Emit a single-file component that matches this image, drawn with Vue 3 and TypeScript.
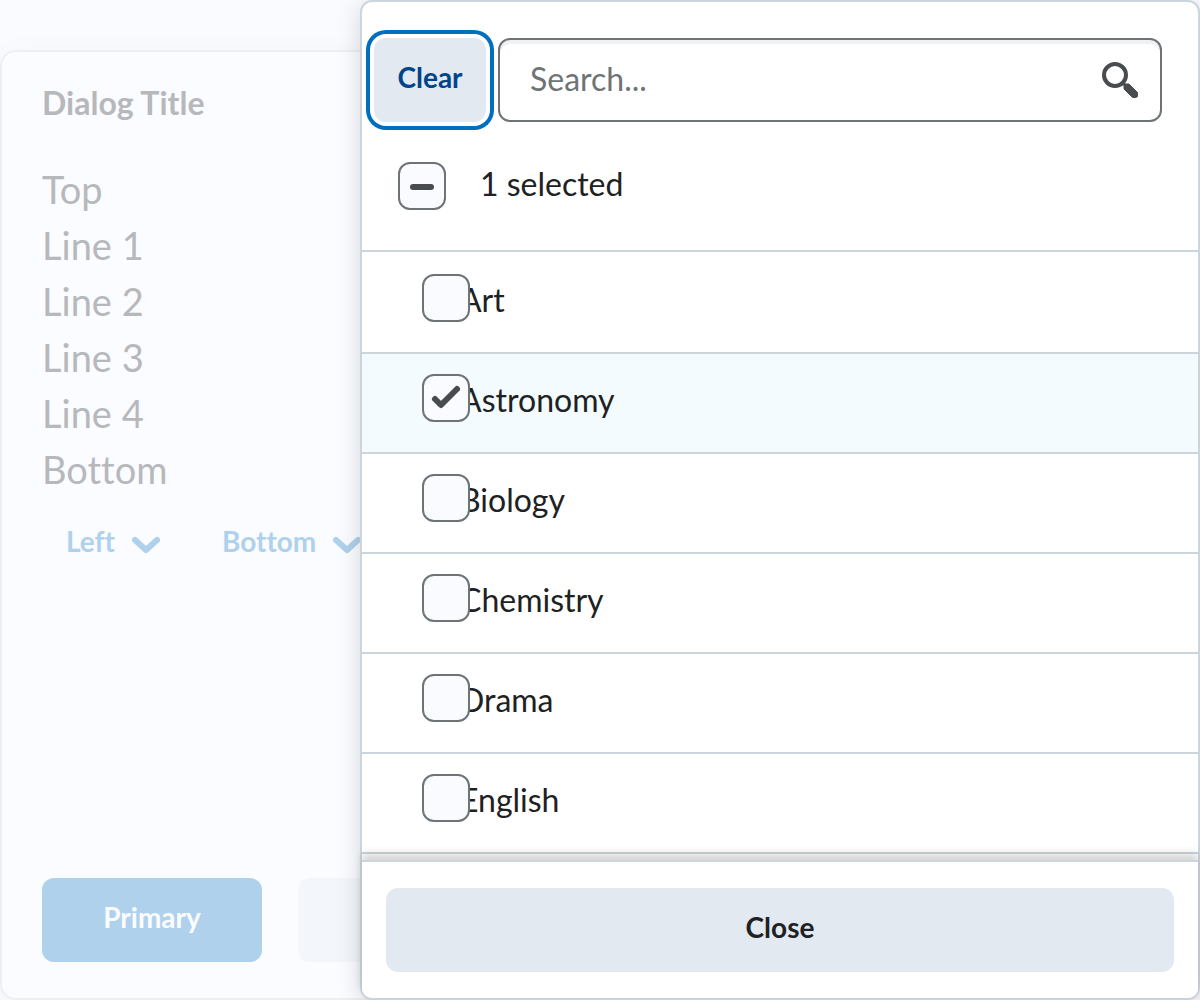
<script setup lang="ts">
import { computed, ref, onMounted } from 'vue'

interface Subject {
  key: string
  label: string
  selected: boolean
}

const lines = ['Top', 'Line 1', 'Line 2', 'Line 3', 'Line 4', 'Bottom']
const menus = ['Left', 'Bottom']

const subjects = ref<Subject[]>([
  { key: 'art', label: 'Art', selected: false },
  { key: 'astronomy', label: 'Astronomy', selected: true },
  { key: 'biology', label: 'Biology', selected: false },
  { key: 'chemistry', label: 'Chemistry', selected: false },
  { key: 'drama', label: 'Drama', selected: false },
  { key: 'english', label: 'English', selected: false },
])

const query = ref('')
const clearButton = ref<HTMLButtonElement | null>(null)

const selectedCount = computed(() => subjects.value.filter((s) => s.selected).length)
const allSelected = computed(() => selectedCount.value === subjects.value.length)
const someSelected = computed(() => selectedCount.value > 0 && !allSelected.value)

function clearAll(): void {
  subjects.value.forEach((s) => (s.selected = false))
}

function toggleAll(): void {
  const next = !allSelected.value
  subjects.value.forEach((s) => (s.selected = next))
}

onMounted(() => clearButton.value?.focus())
</script>

<template>
  <div class="page">
    <main class="dialog">
      <h1 class="dialog-title">Dialog Title</h1>
      <div class="dialog-body">
        <p v-for="line in lines" :key="line">{{ line }}</p>
        <div class="menus">
          <button v-for="menu in menus" :key="menu" type="button" class="menu-button">
            {{ menu }}
            <svg class="chevron" viewBox="0 0 28 18" aria-hidden="true">
              <path d="M3 4 L14 14 L25 4" />
            </svg>
          </button>
        </div>
      </div>
      <div class="dialog-footer">
        <button type="button" class="primary">Primary</button>
        <button type="button" class="secondary" aria-label="Secondary"></button>
      </div>
    </main>

    <section class="panel" aria-label="Filter">
      <header class="panel-header">
        <div class="search-row">
          <button ref="clearButton" type="button" class="clear" @click="clearAll">Clear</button>
          <div class="search">
            <input v-model="query" type="text" placeholder="Search..." aria-label="Search" />
            <button type="button" class="search-button" aria-label="Search">
              <svg viewBox="0 0 36 36" aria-hidden="true">
                <circle cx="13" cy="13" r="11" fill="none" stroke="#494c4e" stroke-width="4" />
                <path d="M20 20 L25 25" stroke="#494c4e" stroke-width="3" />
                <path
                  d="M22 24 Q22 22 24 22 H27 L35 30 Q37 32 35.500 34.500 Q33 37 30 35 L22 27 Z"
                  fill="#494c4e"
                  stroke="#494c4e"
                  stroke-width="1"
                />
              </svg>
            </button>
          </div>
        </div>
        <label class="select-all">
          <span class="box">
            <input type="checkbox" :checked="allSelected" :indeterminate="someSelected" @change="toggleAll" />
            <svg v-if="someSelected" viewBox="0 0 48 48" aria-hidden="true">
              <path d="M15 25 H33" />
            </svg>
          </span>
          <span>{{ selectedCount }} selected</span>
        </label>
      </header>

      <ul class="subjects">
        <li v-for="subject in subjects" :key="subject.key" :class="{ selected: subject.selected }">
          <label>
            <span class="box">
              <input v-model="subject.selected" type="checkbox" />
              <svg v-if="subject.selected" viewBox="0 0 48 48" aria-hidden="true">
                <path d="M13 25 L19 31 L35 15" />
              </svg>
            </span>
            <span>{{ subject.label }}</span>
          </label>
        </li>
      </ul>

      <footer class="panel-footer">
        <button type="button" class="close">Close</button>
      </footer>
    </section>
  </div>
</template>

<style>
body {
  margin: 0;
  background: #fafbff;
}
</style>

<style scoped>
.page {
  position: relative;
  display: flex;
  min-height: 100vh;
  box-sizing: border-box;
  padding-top: 50px;
  overflow: hidden;
  color: #202122;
  font-family: Lato, 'Liberation Sans', sans-serif;
  font-size: 32px;
  font-variant-ligatures: none;
  line-height: 48px;
}

button {
  border: 0;
  border-radius: 12px;
  font-family: inherit;
  font-size: 28px;
  font-weight: 700;
  font-variant-ligatures: none;
  line-height: 40px;
  cursor: pointer;
}

.dialog {
  display: flex;
  flex: 1;
  flex-direction: column;
  box-sizing: border-box;
  padding: 27px 40px 36px;
  border: 2px solid #edeff3;
  border-radius: 16px;
  background: #fbfcff;
  box-shadow: 0 4px 24px #f1f2f6;
  color: #b7b8bc;
}

.dialog-title {
  margin: 0 0 34px;
  font-size: 32px;
  font-weight: 700;
  line-height: 48px;
}

.dialog-body {
  flex: 1;
  font-size: 38px;
  line-height: 56px;
}

.dialog-body p {
  margin: 0;
}

.menus {
  display: flex;
  gap: 14px;
  margin-top: 2px;
}

.menu-button {
  display: flex;
  align-items: center;
  gap: 17px;
  height: 84px;
  padding: 0 24px;
  background: none;
  color: #afd1ec;
}

.chevron {
  width: 28px;
  height: 18px;
  margin-top: 8px;
  fill: none;
  stroke: #afd1ec;
  stroke-width: 6;
  stroke-linecap: round;
  stroke-linejoin: round;
}

.dialog-footer {
  display: flex;
  gap: 36px;
}

.primary,
.secondary {
  width: 220px;
  height: 84px;
  padding: 0 0 6px;
}

.primary {
  background: #afd1ec;
  color: #fbfcff;
}

.secondary {
  background: #f3f6fb;
}

.panel {
  position: absolute;
  inset: 0 0 0 30%;
  display: flex;
  flex-direction: column;
  border: 2px solid #cdd5dc;
  border-radius: 12px;
  background: #fff;
  box-shadow: 0 4px 24px rgba(0, 0, 0, 0.15);
}

.panel-header {
  padding: 36px 36px 40px 12px;
  border-bottom: 2px solid #cdd5dc;
}

.search-row {
  display: flex;
  gap: 12px;
}

.clear {
  width: 112px;
  height: 84px;
  padding: 0 0 6px;
  background: #e3e9f1;
  color: #004489;
}

.clear:focus {
  outline: none;
  box-shadow: 0 0 0 4px #fff, 0 0 0 8px #006fbf;
}

.search {
  position: relative;
  flex: 1;
}

.search input {
  width: 100%;
  height: 84px;
  box-sizing: border-box;
  padding: 0 84px 4px 30px;
  border: 2px solid #6e7376;
  border-radius: 12px;
  background: #fff;
  box-shadow: inset 0 4px 0 #eff1f2;
  color: #202122;
  font-family: inherit;
  font-size: 32px;
}

.search input::placeholder {
  color: #6e7376;
  opacity: 1;
}

.search-button {
  position: absolute;
  top: 0;
  right: 0;
  display: flex;
  align-items: center;
  justify-content: center;
  width: 84px;
  height: 84px;
  padding: 0;
  background: none;
}

.search-button svg {
  width: 36px;
  height: 36px;
}

.select-all {
  display: flex;
  gap: 34px;
  margin: 40px 0 0 24px;
}

.select-all > span:last-child {
  line-height: 44px;
}

.box {
  position: relative;
  z-index: 1;
  width: 48px;
  height: 48px;
}

.box input {
  display: block;
  width: 48px;
  height: 48px;
  margin: 0;
  appearance: none;
  border: 2px solid #6e7376;
  border-radius: 12px;
  background: #fafbff;
}

.box svg {
  position: absolute;
  inset: 0;
  fill: none;
  stroke: #494c4e;
  stroke-width: 6;
  stroke-linecap: round;
  stroke-linejoin: round;
  pointer-events: none;
}

.subjects {
  flex: 1;
  margin: 0;
  padding: 0;
  background: #fff;
  list-style: none;
}

.subjects li {
  padding: 20px 60px 26px;
  border-bottom: 2px solid #cdd5dc;
}

.subjects li:first-child {
  padding-top: 22px;
}

.subjects li.selected {
  background: #f3fbff;
}

.subjects label {
  display: flex;
  height: 52px;
  line-height: 52px;
}

.subjects .box {
  margin-right: -10px;
}

.panel-footer {
  display: flex;
  padding: 26px 24px;
  border-top: 2px solid #cdd5dc;
  border-radius: 0 0 10px 10px;
  background: #fff;
  box-shadow: 0 -6px 8px rgba(0, 0, 0, 0.17);
}

.close {
  flex: 1;
  height: 84px;
  padding: 0 0 6px;
  background: #e3e9f1;
  color: #202122;
}
</style>
